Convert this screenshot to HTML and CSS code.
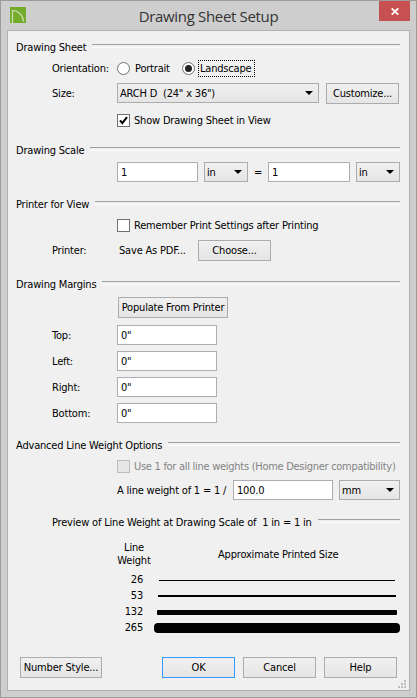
FILE: index.html
```
<!DOCTYPE html>
<html lang="en">
<head>
    <meta charset="UTF-8">
    <meta name="viewport" content="width=device-width, initial-scale=1.0">
    <title>Drawing Sheet Setup</title>
    <link rel="stylesheet" href="styles.css">
</head>
<body>
    <div class="window">
        <header class="titlebar">
            <svg class="app-icon" width="16" height="16" viewBox="0 0 16 16">
                <rect width="16" height="16" fill="#74ac2c"/>
                <path d="M2.5 16V3.5C8 3.5 13 8 13.5 14.5" fill="none" stroke="#cfe0b8" stroke-width="1.2"/>
            </svg>
            <h1 class="title">Drawing Sheet Setup</h1>
            <button class="close" aria-label="Close">
                <svg width="8" height="7" viewBox="0 0 8 7"><path d="M.7 .3L7.3 6.7M7.3 .3L.7 6.7" stroke="#fff" stroke-width="1.7"/></svg>
            </button>
        </header>

        <main class="panel">
            <section class="sheet">
                <h2 class="legend">Drawing Sheet</h2>
                <div class="row orientation">
                    <span class="label">Orientation:</span>
                    <span class="radio"></span><span class="portrait">Portrait</span>
                    <span class="radio checked"></span><span class="focused">Landscape</span>
                </div>
                <div class="row size">
                    <span class="label">Size:</span>
                    <div class="select paper">ARCH D&nbsp; (24" x 36")</div>
                    <button class="btn">Customize...</button>
                </div>
                <div class="row show">
                    <span class="check"><svg width="11" height="11" viewBox="0 0 11 11"><path d="M2 5.3L4.3 8.2L9 2.2" fill="none" stroke="#000" stroke-width="2"/></svg></span>
                    <span>Show Drawing Sheet in View</span>
                </div>
            </section>

            <section class="scale">
                <h2 class="legend">Drawing Scale</h2>
                <div class="row">
                    <input class="field" type="text" value="1">
                    <div class="select">in</div>
                    <span class="equals">=</span>
                    <input class="field second" type="text" value="1">
                    <div class="select">in</div>
                </div>
            </section>

            <section class="printer">
                <h2 class="legend">Printer for View</h2>
                <div class="row remember">
                    <span class="check"></span>
                    <span>Remember Print Settings after Printing</span>
                </div>
                <div class="row">
                    <span class="label">Printer:</span>
                    <span class="printer-name">Save As PDF...</span>
                    <button class="btn">Choose...</button>
                </div>
            </section>

            <section class="margins">
                <h2 class="legend">Drawing Margins</h2>
                <button class="btn populate">Populate From Printer</button>
                <div class="row"><span class="label">Top:</span><input class="field" type="text" value='0"'></div>
                <div class="row"><span class="label">Left:</span><input class="field" type="text" value='0"'></div>
                <div class="row"><span class="label">Right:</span><input class="field" type="text" value='0"'></div>
                <div class="row"><span class="label">Bottom:</span><input class="field" type="text" value='0"'></div>
            </section>

            <section class="advanced">
                <h2 class="legend">Advanced Line Weight Options</h2>
                <div class="row disabled">
                    <span class="check"></span>
                    <span>Use 1 for all line weights (Home Designer compatibility)</span>
                </div>
                <div class="row weight">
                    <span class="weight-label">A line weight of 1 = 1 /</span>
                    <input class="field" type="text" value="100.0">
                    <div class="select">mm</div>
                </div>
            </section>

            <section class="preview">
                <h2 class="legend">Preview of Line Weight at Drawing Scale of&nbsp; 1 in = 1 in</h2>
                <div class="preview-head">
                    <span class="col-weight">Line<br>Weight</span>
                    <span class="col-size">Approximate Printed Size</span>
                </div>
                <div class="sample"><span>26</span><i class="line line-26"></i></div>
                <div class="sample"><span>53</span><i class="line line-53"></i></div>
                <div class="sample"><span>132</span><i class="line line-132"></i></div>
                <div class="sample"><span>265</span><i class="line line-265"></i></div>
            </section>

            <footer class="actions">
                <button class="btn number-style">Number Style...</button>
                <button class="btn default">OK</button>
                <button class="btn">Cancel</button>
                <button class="btn">Help</button>
            </footer>
            <svg class="grip" width="8" height="8" viewBox="0 0 8 8" fill="#bcbcbc">
                <path d="M6 0h2v2H6zM3 3h2v2H3zM6 3h2v2H6zM0 6h2v2H0zM3 6h2v2H3zM6 6h2v2H6z"/>
            </svg>
        </main>
    </div>
</body>
</html>
```
FILE: styles.css
```
* {
    box-sizing: border-box;
}

body {
    margin: 0;
    font: 11px/13px "DejaVu Sans Condensed", "DejaVu Sans", sans-serif;
    font-stretch: condensed;
    letter-spacing: -0.19px;
    color: #000;
    overflow: hidden;
}

.window {
    width: 417px;
    height: 698px;
    padding: 0 6px 6px;
    border: 1px solid #9c9c9c;
    background: #cecece;
}

/* Title bar */
.titlebar {
    display: flex;
    height: 29px;
    padding-left: 3px;
    justify-content: space-between;
    align-items: flex-start;
}

.app-icon {
    margin-top: 6px;
}

.title {
    margin: 4px 0 0 12px;
    font: 15px/22px "Open Sans", sans-serif;
    letter-spacing: -0.33px;
    color: #333;
}

.close {
    display: flex;
    width: 31px;
    height: 20px;
    padding: 0;
    align-items: center;
    justify-content: center;
    border: none;
    background: #c75050;
}

.panel {
    position: relative;
    height: 661px;
    padding: 6px 9px 0 8px;
    border: 1px solid #b0b0b0;
    background: #f0f0f0;
}

/* Section headings with a rule */
.legend {
    display: flex;
    height: 20px;
    margin: 0;
    align-items: center;
    font: inherit;
    white-space: nowrap;
}

.legend::after {
    content: "";
    flex: 1;
    height: 2px;
    margin: 0 0 2px 6px;
    border-top: 1px solid #a0a0a0;
    border-bottom: 1px solid #fcfcfc;
}

.row {
    display: flex;
    height: 20px;
    padding-left: 36px;
    align-items: center;
    white-space: nowrap;
}

.label {
    width: 65px;
}

/* Controls */
.btn {
    width: 73px;
    height: 21px;
    padding: 0;
    border: 1px solid #acacac;
    background: linear-gradient(#f0f0f0, #e5e5e5);
    font: inherit;
    letter-spacing: inherit;
    color: inherit;
    white-space: nowrap;
}

.btn.default {
    border-color: #3399ff;
}

.field {
    width: 100px;
    height: 20px;
    padding: 0 3px;
    border: 1px solid #abadb3;
    background: #fff;
    font: inherit;
    letter-spacing: inherit;
}

.select {
    display: flex;
    width: 44px;
    height: 20px;
    padding: 0 5px 0 2px;
    justify-content: space-between;
    align-items: center;
    border: 1px solid #acacac;
    background: linear-gradient(#f0f0f0, #e5e5e5);
}

.select::after {
    content: "";
    margin-top: -1px;
    border: 4px solid transparent;
    border-top-color: #000;
    border-bottom: none;
}

.check {
    width: 13px;
    height: 13px;
    margin-right: 4px;
    border: 1px solid #707070;
    background: #fff;
}

.check svg {
    display: block;
}

.radio {
    display: flex;
    width: 13px;
    height: 13px;
    align-items: center;
    justify-content: center;
    border: 1px solid #707070;
    border-radius: 50%;
    background: #fff;
}

.radio.checked::after {
    content: "";
    width: 7px;
    height: 7px;
    border-radius: 50%;
    background: #222;
}

/* Drawing sheet */
.orientation {
    margin-top: 1px;
}

.portrait {
    width: 47px;
    margin-left: 5px;
}

.portrait + .radio {
    margin-right: 3px;
}

.focused {
    width: 57px;
    height: 17px;
    padding: 1px;
    border: 1px dotted #000;
}

.size {
    height: 21px;
    margin-top: 5px;
    align-items: flex-start;
}

.size .label {
    margin-top: 4px;
}

.paper {
    width: 202px;
    margin-right: 7px;
}

.show,
.remember,
.disabled {
    padding-left: 101px;
}

.show {
    margin-top: 6px;
}

/* Drawing scale */
.scale {
    margin-top: 10px;
}

.scale .row {
    margin-top: 2px;
    padding-left: 101px;
}

.scale .field {
    width: 81px;
    margin-right: 6px;
}

.scale .second {
    width: 82px;
}

.equals {
    width: 20px;
    padding-left: 6px;
}

/* Printer */
.printer {
    margin-top: 12px;
}

.remember {
    margin-top: 1px;
}

.remember + .row {
    height: 21px;
    margin-top: 5px;
}

.printer-name {
    width: 79px;
    margin-left: 2px;
}

/* Margins */
.margins {
    margin-top: 13px;
}

.populate {
    display: block;
    width: 110px;
    margin: 3px 0 7px 102px;
}

.margins .row + .row {
    margin-top: 6px;
}

/* Line weights */
.advanced {
    margin-top: 12px;
}

.disabled {
    margin-top: 1px;
    letter-spacing: -0.28px;
    color: #838383;
}

.disabled .check {
    border-color: #bcbcbc;
    background: #e6e6e6;
}

.weight {
    margin-top: 4px;
    padding-left: 101px;
}

.weight-label {
    width: 116px;
}

.weight .field {
    margin-right: 6px;
}

.weight .select {
    width: 61px;
}

.preview {
    margin-top: 12px;
}

.preview .legend {
    padding-left: 36px;
}

.preview-head {
    display: flex;
    height: 26px;
    margin: 9px 0 4px;
    padding-left: 98px;
    align-items: center;
}

.col-weight {
    width: 40px;
    text-align: center;
}

.col-size {
    margin-left: 64px;
}

.sample {
    display: flex;
    height: 16px;
    align-items: center;
}

.sample span {
    width: 127px;
    margin-right: 11px;
    text-align: right;
}

.line {
    flex: 1;
    background: #000;
}

.line-26 {
    height: 1px;
    margin: 2px 5px 0;
}

.line-53 {
    height: 2px;
    margin: 1px 4px 0;
}

.line-132 {
    height: 5px;
    margin: 2px 3px 0;
    border-radius: 1px;
}

.line-265 {
    height: 10px;
    margin-top: 2px;
    border-radius: 4px;
}

/* Bottom buttons */
.actions {
    display: flex;
    margin: 22px 0 0 4px;
    gap: 8px;
}

.number-style {
    width: 82px;
    margin-right: 52px;
}

.grip {
    position: absolute;
    right: 3px;
    bottom: 2px;
}
```
